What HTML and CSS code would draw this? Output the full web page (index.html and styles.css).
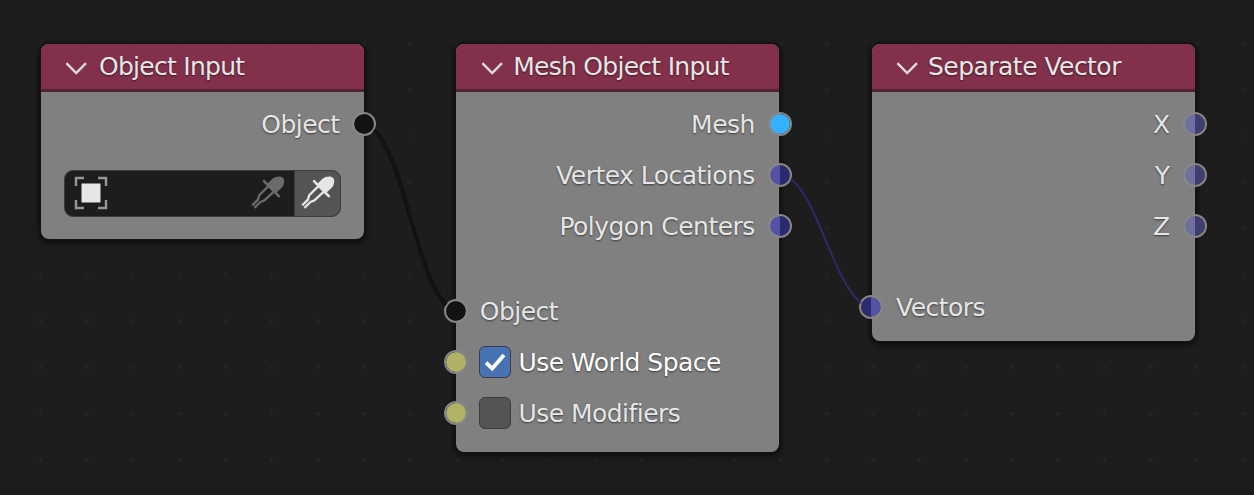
FILE: index.html
```html
<!DOCTYPE html>
<html lang="en">
<head>
<meta charset="utf-8">
<title>Node Editor</title>
<link rel="stylesheet" href="styles.css">
</head>
<body>
<main class="canvas">
  <svg class="backdrop" width="1254" height="495" viewBox="0 0 1254 495">
    <defs>
      <pattern id="grid" x="39" y="42" width="46.25" height="46.25" patternUnits="userSpaceOnUse">
        <rect width="3" height="3" fill="#2a2224"/>
      </pattern>
    </defs>
    <rect y="40" width="1254" height="455" fill="url(#grid)"/>
  </svg>

  <section class="node node-object">
    <header class="node-header">
      <svg class="chevron" width="24" height="16" viewBox="0 0 24 16"><path d="M2.4 3.2 12.2 13 22 3.2"/></svg>
      <span class="title t-object">Object Input</span>
    </header>
    <div class="node-body">
      <div class="row output"><span class="label">Object</span><i class="socket black"></i></div>
      <div class="field">
        <div class="field-value">
          <svg width="34" height="34" viewBox="0 0 34 34">
            <path class="frame" d="M2 10V2h8M24 2h8v8M32 24v8h-8M10 32H2v-8"/>
            <path class="square" d="M7.5 7.5h19v19h-19z"/>
          </svg>
          <svg class="dropper dim" width="34" height="34" viewBox="0 0 34 34"><use href="#dropper"/></svg>
        </div>
        <div class="field-pick">
          <svg class="dropper" width="34" height="34" viewBox="0 0 34 34">
            <g id="dropper">
              <path class="bulb" d="M15.6 8.6 21.8 2.6C24.5.2 29.6-.4 31.9 1.8c2.2 2.3 1.4 7.1-1 9.7L24.7 17.5z"/>
              <path class="bar" d="M13 5.2 27.8 20.2"/>
              <path class="tube" d="M17.2 10.4 8.2 19.2 7 23.6 1.2 29.4M22.6 15.8l-9.2 8.6-4 1.6-6 5.8"/>
            </g>
          </svg>
        </div>
      </div>
    </div>
  </section>

  <section class="node node-mesh">
    <header class="node-header">
      <svg class="chevron" width="24" height="16" viewBox="0 0 24 16"><path d="M2.4 3.2 12.2 13 22 3.2"/></svg>
      <span class="title t-mesh">Mesh Object Input</span>
    </header>
    <div class="node-body">
      <div class="row output"><span class="label">Mesh</span><i class="socket blue"></i></div>
      <div class="row output"><span class="label">Vertex Locations</span><i class="socket violet"></i></div>
      <div class="row output"><span class="label">Polygon Centers</span><i class="socket violet"></i></div>
      <div class="inputs">
        <div class="row input"><i class="socket black"></i><span class="label">Object</span></div>
        <div class="row input"><i class="socket yellow"></i>
          <span class="check on"><svg width="24" height="24" viewBox="0 0 24 24"><path d="m3 12.6 6.2 6L21 5"/></svg></span>
          <span class="label bright">Use World Space</span></div>
        <div class="row input"><i class="socket yellow"></i><span class="check"></span><span class="label">Use Modifiers</span></div>
      </div>
    </div>
  </section>

  <section class="node node-vector">
    <header class="node-header">
      <svg class="chevron" width="24" height="16" viewBox="0 0 24 16"><path d="M2.4 3.2 12.2 13 22 3.2"/></svg>
      <span class="title t-vector">Separate Vector</span>
    </header>
    <div class="node-body">
      <div class="row output"><span class="label">X</span><i class="socket faded"></i></div>
      <div class="row output"><span class="label">Y</span><i class="socket faded"></i></div>
      <div class="row output"><span class="label">Z</span><i class="socket faded"></i></div>
      <div class="inputs">
        <div class="row input"><i class="socket violet-in"></i><span class="label">Vectors</span></div>
      </div>
    </div>
  </section>

  <svg class="links" width="1254" height="495" viewBox="0 0 1254 495">
    <path class="link-object" d="M374 130C404 158 416 274 446 305"/>
    <path class="link-vector" d="M791 179C818 200 833 280 861 303"/>
  </svg>
</main>
</body>
</html>
```

FILE: styles.css
```css
body {
  margin: 0;
  background: #1d1d1d;
}

.canvas {
  position: relative;
  width: 1254px;
  height: 495px;
  overflow: hidden;
  background: #1d1d1d;
  color: #e6e6e6;
  font: 25px/30px "DejaVu Sans", sans-serif;
  letter-spacing: -.53px;
  white-space: nowrap;
}

.backdrop,
.links {
  position: absolute;
  inset: 0;
  fill: none;
  pointer-events: none;
}

.link-object { stroke: #121212; stroke-width: 4; }
.link-vector { stroke: #2b2a6e; stroke-width: 2; }

/* Nodes placed on the free canvas */
.node {
  position: absolute;
  top: 43.5px;
  width: 323px;
  box-sizing: border-box;
  border-radius: 8px;
  background: #808080;
  box-shadow: 0 0 0 1px #141414, 0 1px 3px 2px #101010, 0 3px 7px 2px #141414;
}

.node-object { left: 40.6px; height: 195.5px; }
.node-mesh { left: 456.4px; height: 408.5px; }
.node-vector { left: 872px; height: 297.5px; }

.node-header {
  display: flex;
  align-items: center;
  height: 48.5px;
  box-sizing: border-box;
  padding: 0 0 0 23px;
  border-bottom: 3px solid #502532;
  border-radius: 8px 8px 0 0;
  background: #83314a;
}

.node-mesh .node-header { padding-left: 23.8px; }

.chevron {
  fill: none;
  stroke: #dddddd;
  stroke-width: 2.4;
  margin-top: 3px;
}

.title,
.label {
  text-shadow: 0 1px 2px rgba(0, 0, 0, .55);
}

.title {
  margin: 2px 0 0 11.4px;
  letter-spacing: -.72px;
}

.t-mesh { margin-left: 9px; }
.t-vector {
  margin-left: 9px;
  letter-spacing: -.53px;
}

.node-body { padding-top: 7px; }

.row {
  position: relative;
  display: flex;
  align-items: center;
  height: 51px;
  padding: 0 24px;
}

.output { justify-content: flex-end; }
.node-mesh .output { padding-right: 24.6px; }
.node-vector .output { padding-right: 25.5px; }
.node-mesh .input { padding-left: 23.4px; }
.node-mesh .inputs { padding-top: 34px; }
.node-vector .inputs { padding-top: 30px; }

.bright { color: #ffffff; }

/* Sockets straddle the node edge */
.socket {
  position: absolute;
  top: 13px;
  width: 20px;
  height: 20px;
  border: 2px solid #8c8c8c;
  border-radius: 50%;
  background-clip: padding-box;
}

.output .socket {
  right: -12px;
  border-color: #8c8c8c #8c8c8c #808080 #808080;
}

.node-mesh .output .socket { right: -12.6px; }

.input .socket {
  left: -12px;
  border-color: #808080 #808080 #8c8c8c #8c8c8c;
}

.node-vector .input .socket { left: -12.6px; }

.socket.socket { border-color: #868686; }

.black { background-color: #121212; }
.blue { background-color: #35b1ff; }
.yellow { background-color: #b1b266; }
.violet { background-image: linear-gradient(90deg, #5352a5 50%, #2b2a6e 50%); }
.violet-in { background-image: linear-gradient(90deg, #2b2a6e 50%, #5352a5 50%); }
.faded { background-image: linear-gradient(90deg, #6f6fa2 50%, #3f3e70 50%); }

.field {
  display: flex;
  width: 277px;
  height: 47px;
  box-sizing: border-box;
  margin: 20px 0 0 23.4px;
  border: 1px solid #3d3d3d;
  border-radius: 9px;
  overflow: hidden;
  background: #1d1d1d;
}

.field-value {
  display: flex;
  flex: 1;
  align-items: center;
  justify-content: space-between;
  padding: 0 9px 1px 9.4px;
}

.field-pick {
  display: flex;
  align-items: center;
  width: 46px;
  box-sizing: border-box;
  padding: 0 0 1px 6px;
  border-left: 1px solid #3d3d3d;
  background: #545454;
}

.frame { fill: none; stroke: #969696; stroke-width: 2.4; }
.square { fill: #e6e6e6; }
.dropper { color: #e6e6e6; }
.dropper.dim { color: #6b6b6b; }
.bulb { fill: currentColor; }
.bar { fill: none; stroke: currentColor; stroke-width: 2.6; stroke-linecap: round; }
.tube { fill: none; stroke: currentColor; stroke-width: 2.3; stroke-linejoin: round; }

.check {
  display: flex;
  align-items: center;
  justify-content: center;
  width: 32px;
  height: 32px;
  box-sizing: border-box;
  margin: -1px 7.4px 0 -.8px;
  border: 1px solid #3d3d3d;
  border-radius: 6px;
  background: #545454;
}

.check.on { background: #4772b3; }
.check svg { fill: none; stroke: #ffffff; stroke-width: 3.8; }
```
